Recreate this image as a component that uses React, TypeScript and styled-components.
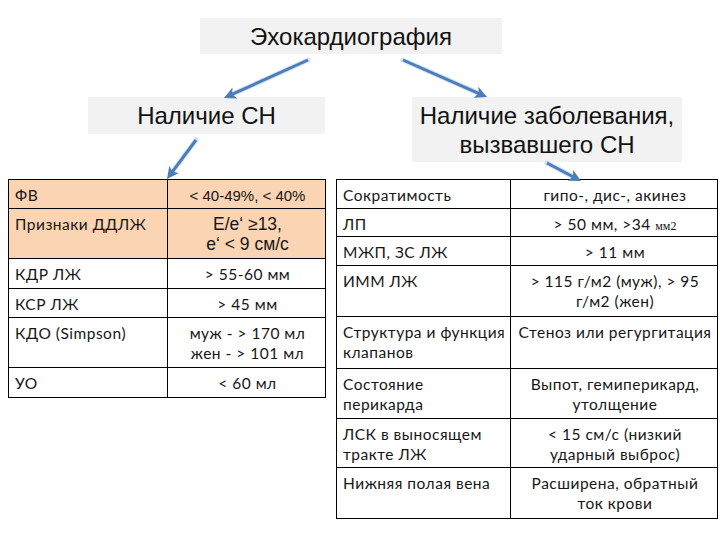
import * as React from "react";
import styled, { createGlobalStyle } from "styled-components";

const Global = createGlobalStyle`
  html, body {
    margin: 0;
    padding: 0;
    background: #ffffff;
  }
`;

const Page = styled.div`
  position: relative;
  width: 720px;
  height: 540px;
  padding-top: 18px;
  box-sizing: border-box;
  overflow: hidden;
  color: #111111;
`;

const HeadBox = styled.div<{ w: number; h: number }>`
  width: ${({ w }) => w}px;
  height: ${({ h }) => h}px;
  background: #f2f2f2;
  display: flex;
  flex-direction: column;
  align-items: center;
  justify-content: center;
  font-family: "Liberation Sans", Arial, sans-serif;
  font-size: 24px;
  line-height: 29px;
  text-align: center;
  color: #111111;
`;

const TitleRow = styled.div`
  display: flex;
  padding-left: 200px;
`;

const HeaderRow = styled.div`
  display: flex;
  align-items: flex-start;
  gap: 87px;
  margin-top: 43px;
  padding-left: 88px;
`;

const TablesRow = styled.div`
  display: flex;
  align-items: flex-start;
  gap: 10px;
  margin-top: 17px;
  padding-left: 8px;
`;

const Table = styled.div<{ cols: string; rows: string }>`
  display: grid;
  grid-template-columns: ${({ cols }) => cols};
  grid-template-rows: ${({ rows }) => rows};
  border-top: 1px solid #000;
  border-left: 1px solid #000;
`;

const Cell = styled.div<{ shade?: boolean; center?: boolean }>`
  box-sizing: border-box;
  border-right: 1px solid #000;
  border-bottom: 1px solid #000;
  background: ${({ shade }) => (shade ? "#fbd4b4" : "#ffffff")};
  padding: 5px 4px 0 6px;
  text-align: ${({ center }) => (center ? "center" : "left")};
  font-family: Lato, "Open Sans", sans-serif;
  font-size: 15.5px;
  letter-spacing: 0.5px;
  line-height: 20px;
  white-space: nowrap;
  color: #161616;
`;

const Arial = styled.span<{ size: number }>`
  font-family: "Liberation Sans", Arial, sans-serif;
  font-size: ${({ size }) => size}px;
  letter-spacing: 0;
`;

const SerifSmall = styled.span`
  font-family: "Liberation Serif", "Times New Roman", serif;
  font-size: 12px;
  letter-spacing: 0;
`;

const Arrows = styled.svg`
  position: absolute;
  left: 0;
  top: 0;
  pointer-events: none;
`;

type Seg = [number, number, number, number];

const arrowList: Seg[] = [
  [308, 60, 224, 98],
  [403, 60, 487, 97],
  [196, 140, 167, 179],
  [547, 163, 581, 181],
];

const Arrow: React.FC<{ seg: Seg }> = ({ seg }) => {
  const [x1, y1, x2, y2] = seg;
  const dx = x2 - x1;
  const dy = y2 - y1;
  const len = Math.hypot(dx, dy);
  const ux = dx / len;
  const uy = dy / len;
  const head = 12;
  const half = 6;
  const bx = x2 - ux * head;
  const by = y2 - uy * head;
  const pts = `${x2},${y2} ${bx - uy * half},${by + ux * half} ${bx + ux * 3},${by + uy * 3} ${bx + uy * half},${by - ux * half}`;
  return (
    <g>
      <line x1={x1} y1={y1} x2={bx + ux * 3} y2={by + uy * 3} stroke="#a9c4e6" strokeWidth={5} strokeLinecap="round" opacity={0.5} />
      <line x1={x1} y1={y1} x2={bx + ux * 4} y2={by + uy * 4} stroke="#4a7ebb" strokeWidth={3} />
      <polygon points={pts} fill="#4a7ebb" />
    </g>
  );
};

const leftRows: { k: React.ReactNode; v: React.ReactNode; shade?: boolean }[] = [
  { k: "ФВ", v: <Arial size={15}>&lt; 40-49%, &lt; 40%</Arial>, shade: true },
  {
    k: "Признаки ДДЛЖ",
    v: (
      <Arial size={17.5}>
        E/e‘ ≥13,
        <br />
        e‘ &lt; 9 см/с
      </Arial>
    ),
    shade: true,
  },
  { k: "КДР ЛЖ", v: "> 55-60 мм" },
  { k: "КСР ЛЖ", v: "> 45 мм" },
  {
    k: "КДО (Simpson)",
    v: (
      <>
        муж - &gt; 170 мл
        <br />
        жен - &gt; 101 мл
      </>
    ),
  },
  { k: "УО", v: "< 60 мл" },
];

const br = (a: string, b: string) => (
  <>
    {a}
    <br />
    {b}
  </>
);

const rightRows: { k: React.ReactNode; v: React.ReactNode }[] = [
  { k: "Сократимость", v: "гипо-, дис-, акинез" },
  {
    k: "ЛП",
    v: (
      <>
        &gt; 50 мм, &gt;34 <SerifSmall>мм2</SerifSmall>
      </>
    ),
  },
  { k: "МЖП, ЗС ЛЖ", v: "> 11 мм" },
  { k: "ИММ ЛЖ", v: br("> 115 г/м2 (муж), > 95", "г/м2 (жен)") },
  { k: br("Структура и функция", "клапанов"), v: "Стеноз или регургитация" },
  { k: br("Состояние", "перикарда"), v: br("Выпот, гемиперикард,", "утолщение") },
  { k: br("ЛСК в выносящем", "тракте ЛЖ"), v: br("< 15 см/с (низкий", "ударный выброс)") },
  { k: "Нижняя полая вена", v: br("Расширена, обратный", "ток крови") },
];

export default function App() {
  return (
    <Page>
      <Global />
      <TitleRow>
        <HeadBox w={302} h={36}>Эхокардиография</HeadBox>
      </TitleRow>
      <HeaderRow>
        <HeadBox w={237} h={37}>Наличие СН</HeadBox>
        <HeadBox w={270} h={65}>
          <span>Наличие заболевания,</span>
          <span>вызвавшего СН</span>
        </HeadBox>
      </HeaderRow>
      <TablesRow>
        <Table cols="159px 158px" rows="29px 50px 30px 29px 50px 30px">
          {leftRows.map((r, i) => (
            <React.Fragment key={i}>
              <Cell shade={r.shade}>{r.k}</Cell>
              <Cell shade={r.shade} center>
                {r.v}
              </Cell>
            </React.Fragment>
          ))}
        </Table>
        <Table cols="174px 207px" rows="29px 28px 29px 51px 52px 50px 49px 51px">
          {rightRows.map((r, i) => (
            <React.Fragment key={i}>
              <Cell>{r.k}</Cell>
              <Cell center>{r.v}</Cell>
            </React.Fragment>
          ))}
        </Table>
      </TablesRow>
      <Arrows width={720} height={540} viewBox="0 0 720 540">
        {arrowList.map((s, i) => (
          <Arrow key={i} seg={s} />
        ))}
      </Arrows>
    </Page>
  );
}
